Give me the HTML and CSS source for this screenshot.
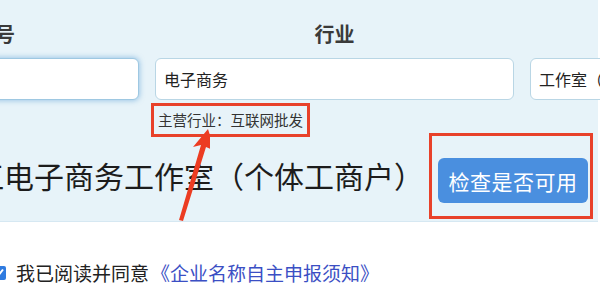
FILE: index.html
```html
<!DOCTYPE html>
<html lang="zh-CN">
<head>
  <meta charset="UTF-8" />
  <title>企业名称自主申报</title>
  <link rel="stylesheet" href="styles.css">
</head>
<body>
  <div class="panel">
    <div class="fields">
      <div class="label">字号</div>
      <div class="label">行业</div>
      <div class="label"></div>

      <div class="input focused"></div>
      <div class="input">电子商务</div>
      <div class="input">工作室（个体工商户）</div>

      <div></div>
      <div class="hint-row">
        <span class="hint">主营行业：互联网批发</span>
      </div>
      <div></div>
    </div>

    <div class="result">
      <div class="name">江电子商务工作室（个体工商户）</div>
      <div class="check-box">
        <button class="check-btn">检查是否可用</button>
      </div>
    </div>

    <svg class="arrow" width="40" height="100" viewBox="170 125 40 100">
      <polygon points="208,129 215,151 206,147 183,221 179,220 201,145 193,147" fill="#ec3c22" />
    </svg>
  </div>

  <div class="agree">
    <svg class="tick" width="14" height="14" viewBox="0 0 14 14">
      <rect width="14" height="14" rx="2" fill="#2f7be0" />
      <path d="M3 7.5 L6 10 L11 3.5" stroke="#fff" stroke-width="2" fill="none" />
    </svg>
    <span>我已阅读并同意</span>
    <a href="#" class="notice">《企业名称自主申报须知》</a>
  </div>
</body>
</html>
```

FILE: styles.css
```css
body {
  margin: 0;
  width: 600px;
  height: 293px;
  overflow: hidden;
  background: #fff;
  font-family: "Noto Sans CJK SC", "Noto Sans", sans-serif;
}

.panel {
  position: relative;
  height: 222px;
  margin-right: 2px;
  background-color: #e7f3f9;
  border-bottom: 1px solid #d6e8f2;
  box-sizing: border-box;
}

.fields {
  display: grid;
  grid-template-columns: 288px 359px 200px;
  column-gap: 16px;
  margin-left: -149px;
  padding-top: 20px;
}

.label {
  text-align: center;
  font-size: 20px;
  font-weight: bold;
  color: #3a3a3a;
  line-height: 28px;
  height: 38px;
}

.input {
  height: 42px;
  box-sizing: border-box;
  padding-left: 8px;
  background: #fff;
  border: 1px solid #b9d6e5;
  border-radius: 6px;
  font-size: 16px;
  line-height: 40px;
  color: #222;
  white-space: nowrap;
  overflow: hidden;
}

.input.focused {
  border-color: #9ec8e2;
  box-shadow: 0 0 5px 1px rgba(90, 160, 215, 0.5);
}

.hint-row {
  height: 32px;
  padding-top: 3px;
  margin-left: -4px;
}

.hint {
  display: inline-block;
  height: 34px;
  box-sizing: border-box;
  padding: 0 4px 0 4px;
  border: 3px solid #e8412a;
  font-size: 14.5px;
  line-height: 27px;
  color: #333;
  white-space: nowrap;
}

.result {
  display: flex;
  align-items: flex-start;
  justify-content: space-between;
  height: 86px;
  margin-top: -3px;
  margin-left: -26px;
  margin-right: 5px;
}

.name {
  padding-top: 22px;
  font-size: 30px;
  line-height: 42px;
  color: #1c1c1c;
  white-space: nowrap;
}

.check-box {
  flex-shrink: 0;
  width: 164px;
  height: 86px;
  box-sizing: border-box;
  margin-top: 1px;
  padding: 22px 2px 0 6px;
  border: 3px solid #e8412a;
}

.check-btn {
  width: 150px;
  height: 45px;
  border: none;
  border-radius: 6px;
  background-color: #4a8fdf;
  color: #fff;
  font-family: inherit;
  font-size: 21px;
  letter-spacing: 0.5px;
}

.arrow {
  position: absolute;
  left: 170px;
  top: 125px;
}

.agree {
  display: flex;
  align-items: center;
  gap: 6px;
  margin-top: 37px;
  margin-left: -8px;
  font-size: 19px;
  color: #222;
}

.tick {
  margin-right: 4px;
}

.notice {
  margin-left: -4px;
  color: #3b4fc4;
  text-decoration: none;
}
```
